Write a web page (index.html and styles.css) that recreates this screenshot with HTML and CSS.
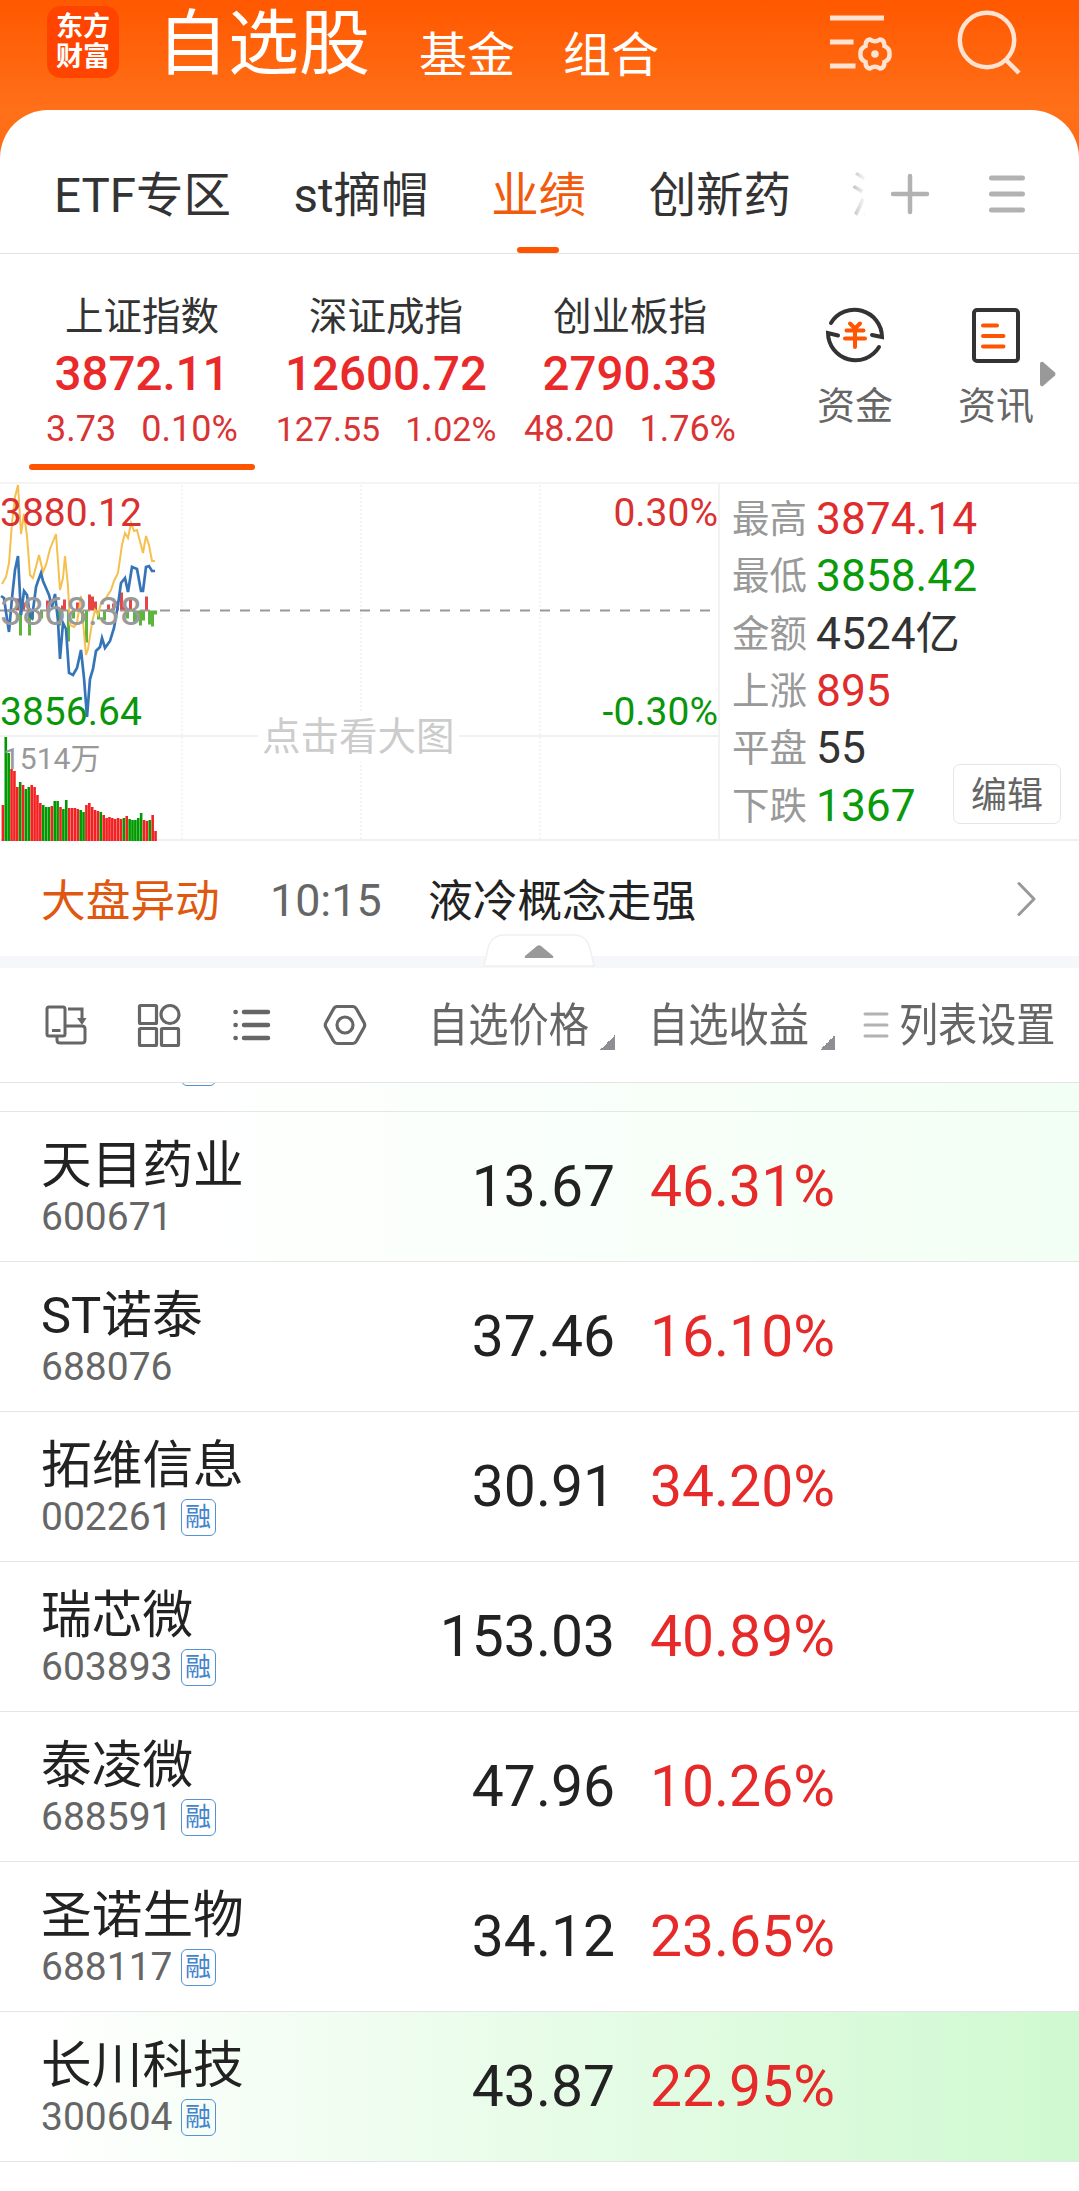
FILE: index.html
```html
<!DOCTYPE html>
<html lang="zh-CN">
<head>
<meta charset="utf-8">
<title>自选股</title>
<link rel="stylesheet" href="styles.css">
</head>
<body>
<header class="top">
  <div class="logo"><span>东方</span><span>财富</span></div>
  <h1>自选股</h1>
  <nav class="top-nav"><a>基金</a><a>组合</a></nav>
  <svg class="ic-manage" width="62" height="58" viewBox="0 0 62 58" fill="none" stroke="#ffe3d2" stroke-width="5">
    <path d="M0 3H54M0 27H23.500M0 51H25.500"/>
    <path stroke-width="4.500" d="M40 24.500Q45 28 50 24.500Q54.500 25 54.500 31Q60 33.500 59.500 39Q60 44.500 54.500 47Q54.500 53 50 53.500Q45 50 40 53.500Q35.500 53 35.500 47Q30 44.500 30.500 39Q30 33.500 35.500 31Q35.500 25 40 24.500Z"/>
    <circle cx="45" cy="39" r="3.800" fill="#ffe3d2" stroke="none"/>
  </svg>
  <svg class="ic-search" width="64" height="66" viewBox="0 0 64 66" fill="none" stroke="#ffe3d2" stroke-width="4.500">
    <circle cx="30" cy="31" r="27.200"/><path d="M48 50L62 64"/>
  </svg>
</header>

<main class="sheet">
  <nav class="tabs">
    <a>ETF专区</a><a>st摘帽</a><a class="on">业绩</a><a>创新药</a><a class="cut">沪</a>
    <svg class="ic-plus" width="40" height="42" viewBox="0 0 40 42" stroke="#b2b2b2" stroke-width="4.500" stroke-linecap="round"><path d="M3 21H37M20 3V39"/></svg>
    <svg class="ic-menu" width="38" height="42" viewBox="0 0 38 42" stroke="#b2b2b2" stroke-width="5" stroke-linecap="round"><path d="M3.500 5H34.500M3.500 21H34.500M3.500 37H34.500"/></svg>
  </nav>

  <section class="indices">
    <div class="index on"><h2>上证指数</h2><strong>3872.11</strong><p><span>3.73</span><span>0.10%</span></p></div>
    <div class="index"><h2>深证成指</h2><strong>12600.72</strong><p class="small"><span>127.55</span><span>1.02%</span></p></div>
    <div class="index"><h2>创业板指</h2><strong>2790.33</strong><p><span>48.20</span><span>1.76%</span></p></div>
    <div class="entry fund">
      <svg width="60" height="62" viewBox="0 0 60 62" fill="none" stroke="#333" stroke-width="4" stroke-linecap="round">
        <path d="M6 19A27.500 27.500 0 0 1 57 33L47 31"/>
        <path d="M54 43A27.500 27.500 0 0 1 3 29L13 31.500"/>
        <path stroke="#ff5500" d="M25 19.500L30 24.500L35 19.500M21.500 26.500H38.500M20 34.500H40M30 26V43"/>
      </svg>
      <span>资金</span>
    </div>
    <div class="entry news">
      <svg width="60" height="62" viewBox="0 0 60 62" fill="none" stroke="#333" stroke-width="4" stroke-linecap="round">
        <rect x="8" y="6" width="44" height="51" rx="3"/>
        <path stroke="#ff5500" d="M17 21.500H31M17 32H37.500M17 42.500H37.500"/>
      </svg>
      <span>资讯</span>
    </div>
    <svg class="ic-more" width="16" height="26" viewBox="0 0 16 26"><path fill="#999" d="M0 3Q0 0 3 1L15 11.500Q16 13 15 14.500L3 25Q0 26 0 23Z"/></svg>
  </section>

  <section class="market">
    <div class="chart">
      <svg id="plot" width="719" height="358" viewBox="0 0 719 358" fill="none">
        <g stroke="#f1f1f1" stroke-width="1.500" stroke-dasharray="2 2"><path d="M182 2V358M361 2V358M540 2V358"/></g>
        <path stroke="#f1f1f1" stroke-width="2" d="M0 253H719"/>
        <g id="flow"></g>
        <path stroke="#999" stroke-width="2" stroke-dasharray="10 10" d="M0 127.500H711"/>
        <polyline stroke="#f5c04e" stroke-width="2" points="2,101 6,94 9,80 12,40 15,14 18,2 21,51 24,31 27,53 30,92 33,95 39,72 43,89 46,82 50,66 56,51 60,107 63,95 65,73 68,103 70,142 74,144 77,140 81,113 84,150 86,172 88,166 92,140 95,127 98,132 101,120 106,115 111,107 114,98 118,90 122,62 125,50 128,55 131,40 134,48 137,47 143,70 146,53 149,62 152,78 155,78"/>
        <polyline stroke="#3674b8" stroke-width="2.700" points="1,113 4,115 6,129 9,149 12,115 15,87 18,73 21,132 24,108 27,112 30,133 32,135 36,104 38,98 41,90 43,98 46,105 49,112 52,124 55,111 58,138 60,176 63,140 66,146 69,190 73,192 77,185 81,167 84,195 87,234 90,196 93,186 96,168 100,164 102,155 105,165 110,158 114,145 118,122 121,100 125,95 128,109 132,84 137,86 141,108 143,108 146,84 149,83 152,88 155,88"/>
        <g id="volume"></g>
      </svg>
      <span class="lab hi">3880.12</span><span class="lab mid">3868.38</span><span class="lab lo">3856.64</span>
      <span class="lab vol">1514万</span>
      <span class="lab hi end">0.30%</span><span class="lab lo end">-0.30%</span>
      <span class="lab hint">点击看大图</span>
    </div>
    <dl class="stats">
      <div><dt>最高</dt><dd class="red">3874.14</dd></div>
      <div><dt>最低</dt><dd class="green">3858.42</dd></div>
      <div><dt>金额</dt><dd>4524亿</dd></div>
      <div><dt>上涨</dt><dd class="red">895</dd></div>
      <div><dt>平盘</dt><dd>55</dd></div>
      <div><dt>下跌</dt><dd class="green">1367</dd></div>
      <button class="edit">编辑</button>
    </dl>
  </section>

  <section class="alert">
    <b>大盘异动</b><time>10:15</time><span>液冷概念走强</span>
    <svg width="20" height="36" viewBox="0 0 20 36" fill="none" stroke="#999" stroke-width="3" stroke-linecap="round" stroke-linejoin="round"><path d="M2 2.500L17 18L2 33.500"/></svg>
  </section>
  <div class="band">
    <svg class="fold" width="114" height="36" viewBox="0 0 114 36"><path fill="#fff" stroke="#f0f0f0" stroke-width="1.500" d="M2 33L6 15Q10 2 22 2H92Q104 2 108 15L112 33Z"/><path fill="#999" d="M55 13Q57 11.500 59 13L71 23Q72 25 70 25H44Q42 25 43 23Z"/></svg>
  </div>

  <section class="tools">
    <svg class="t1" width="44" height="44" viewBox="0 0 44 44" fill="none" stroke="#666" stroke-width="3">
      <rect x="4" y="4" width="18" height="29" rx="2"/><path d="M9 27.500H17.500M22 23H39Q42 23 42 26V37Q42 40 39 40H17Q14 40 14 37V33M25 6H39V17"/><path fill="#666" stroke="none" d="M34 15H43.500L39 22Z"/>
    </svg>
    <svg class="t2" width="44" height="44" viewBox="0 0 44 44" fill="none" stroke="#666" stroke-width="3.200">
      <rect x="2.500" y="2.500" width="17" height="18" rx="1"/><circle cx="33" cy="11.500" r="9"/><rect x="2.500" y="25.500" width="17" height="17" rx="1"/><rect x="24.500" y="25.500" width="17" height="17" rx="1"/>
    </svg>
    <svg class="t3" width="40" height="44" viewBox="0 0 40 44" stroke="#666" stroke-width="4.500" stroke-linecap="round"><path d="M3.500 9H3.700M3.500 22H3.700M3.500 35H3.700M12 9H36M12 22H36M12 35H36"/></svg>
    <svg class="t4" width="44" height="44" viewBox="0 0 44 44" fill="none" stroke="#666" stroke-width="3.200"><path d="M14 3.500H30Q32 3.500 33.500 6L41 19.500Q42.500 22 41 24.500L33.500 38Q32 40.500 30 40.500H14Q12 40.500 10.500 38L3 24.500Q1.500 22 3 19.500L10.500 6Q12 3.500 14 3.500Z"/><circle cx="22" cy="22" r="8"/></svg>
    <span class="col c1"><i>自选价格</i></span><span class="corner"></span>
    <span class="col c2"><i>自选收益</i></span><span class="corner"></span>
    <svg class="t5" width="26" height="28" viewBox="0 0 26 28" stroke="#b2b2b2" stroke-width="3" stroke-linecap="round"><path d="M2 3H24M2 14H24M2 25H24"/></svg>
    <span class="col c3"><i>列表设置</i></span>
  </section>

  <section class="list">
    <div class="row peek tint"><em></em></div>
    <div class="row tint"><div class="who"><h3>天目药业</h3><p>600671</p></div><b>13.67</b><s>46.31%</s></div>
    <div class="row"><div class="who"><h3>ST诺泰</h3><p>688076</p></div><b>37.46</b><s>16.10%</s></div>
    <div class="row"><div class="who"><h3>拓维信息</h3><p>002261<em>融</em></p></div><b>30.91</b><s>34.20%</s></div>
    <div class="row"><div class="who"><h3>瑞芯微</h3><p>603893<em>融</em></p></div><b>153.03</b><s>40.89%</s></div>
    <div class="row"><div class="who"><h3>泰凌微</h3><p>688591<em>融</em></p></div><b>47.96</b><s>10.26%</s></div>
    <div class="row"><div class="who"><h3>圣诺生物</h3><p>688117<em>融</em></p></div><b>34.12</b><s>23.65%</s></div>
    <div class="row deep"><div class="who"><h3>长川科技</h3><p>300604<em>融</em></p></div><b>43.87</b><s>22.95%</s></div>
  </section>
</main>
<script src="chart.js"></script>
</body>
</html>
```
FILE: styles.css
```css
* { box-sizing: border-box; margin: 0; padding: 0; }
body { width: 1079px; height: 2191px; overflow: hidden; font-family: Roboto, "Noto Sans CJK SC", sans-serif; background: linear-gradient(#ff5800, #ff7019 110px, #ff6a14 160px); color: #333; white-space: nowrap; }
h1, h2, h3, b, em, i, s { font-weight: 400; font-style: normal; text-decoration: none; }
svg { flex: none; display: block; }

.top { height: 110px; display: flex; align-items: flex-start; color: #fff; padding-left: 47px; }
.logo { width: 72px; height: 72px; margin-top: 6px; border-radius: 14px; background: #ff4400; display: flex; flex-direction: column; align-items: center; justify-content: center; font-size: 27px; line-height: 30px; font-weight: 700; }
.top h1 { margin-left: 38px; font-size: 71px; line-height: 87px; width: 213px; }
.top-nav { display: flex; gap: 48px; margin-left: 49px; font-size: 48px; line-height: 112px; }
.ic-manage { margin: 15px 0 0 171px; }
.ic-search { margin: 9px 0 0 65px; }

.sheet { background: #fff; border-radius: 48px 48px 0 0; height: 2081px; }
.tabs { height: 144px; border-bottom: 1px solid #e2e2e2; display: flex; align-items: center; padding: 25px 0 0 54px; font-size: 47.500px; line-height: 118px; gap: 62.500px; }
.tabs a { flex: none; padding-top: 2px; height: 118px; line-height: 118px; }
.tabs .on { color: #f25a0c; position: relative; }
.tabs .on::after { content: ""; position: absolute; left: 26px; bottom: 0; width: 42px; height: 6px; border-radius: 3px; background: #ff5500; }
.tabs .cut { width: 15px; overflow: hidden; margin-left: -3px; -webkit-mask-image: linear-gradient(90deg, rgba(0,0,0,.35), transparent); mask-image: linear-gradient(90deg, rgba(0,0,0,.35), transparent); }
.ic-plus { margin-left: -38px; }
.ic-menu { margin-left: -5px; }

.indices { height: 228px; display: flex; padding-left: 20px; }
.index { width: 244px; display: flex; flex-direction: column; align-items: center; position: relative; padding-top: 35px; }
.index h2 { font-size: 38.500px; line-height: 56px; }
.index strong { font-size: 47.500px; line-height: 59px; font-weight: 500; color: #ea2a2a; }
.index p { display: flex; gap: 25px; font-size: 36px; line-height: 50px; color: #d93434; }
.index .small { font-size: 34px; }
.index.on::after { content: ""; position: absolute; left: 9px; bottom: 12px; width: 226px; height: 6px; border-radius: 3px; background: #ff5500; }
.entry { width: 78px; display: flex; flex-direction: column; align-items: center; padding-top: 50px; font-size: 38px; line-height: 56px; color: #666; gap: 12px; }
.fund { margin-left: 64px; }
.news { margin-left: 63px; }
.ic-more { margin: 107px 0 0 5px; }

.market { height: 359px; display: flex; border-top: 2px solid #f4f4f4; border-bottom: 2px solid #f0f0f0; }
.chart { width: 720px; border-right: 2px solid #f2f2f2; position: relative; }
.chart svg { margin-top: -1px; }
.lab { position: absolute; left: 0; font-size: 39px; line-height: 50px; }
.hi { top: 4px; color: #d93030; }
.mid { top: 103px; color: #999; }
.lo { top: 203px; color: #0a960a; }
.end { left: auto; right: 0; }
.vol { top: 250px; left: 3px; font-size: 30px; color: #999; }
.hint { left: 258px; top: 228px; font-size: 38.500px; color: #ccc; background: #fff; padding: 0 4px; }
.stats { flex: 1; padding: 7px 0 0 12px; position: relative; }
.stats div { display: flex; align-items: center; height: 57.300px; line-height: 57px; }
.stats dt { width: 84px; font-size: 37.500px; color: #999; }
.stats dd { font-size: 44.300px; }
.red { color: #e02c2c; }
.green { color: #0a9a0a; }
.edit { position: absolute; right: 18px; bottom: 15px; width: 108px; height: 60px; border: 1px solid #e6e6e6; border-radius: 7px; background: #fff; color: #666; font: 36px/50px Roboto, "Noto Sans CJK SC", sans-serif; padding-top: 4px; }

.alert { height: 115px; display: flex; align-items: center; padding: 0 42px 0 41px; font-size: 44.700px; line-height: 60px; }
.alert b { color: #e0580f; width: 229px; }
.alert time { color: #666; font-size: 44.800px; width: 158px; padding-top: 4px; }
.alert b, .alert span { padding-top: 6px; }
.alert span { flex: 1; color: #222; }
.band { height: 12px; background: #f5f7fa; position: relative; }
.fold { position: absolute; left: 482px; top: -23px; }

.tools { height: 115px; border-bottom: 1px solid #e4e4e4; display: flex; align-items: center; color: #666; padding-left: 43px; }
.t2 { margin-left: 50px; }
.t3 { margin-left: 51px; }
.t4 { margin-left: 51px; }
.col { width: 164px; font-size: 46px; flex: none; margin-top: -8px; }
.col i { display: inline-block; transform: scaleX(.875); transform-origin: 0 50%; }
.c1 { margin-left: 61px; }
.c2 { margin-left: 33px; }
.c3 { width: 170px; margin-left: 10px; }
.c3 i { transform: scaleX(.85); }
.corner { flex: none; width: 15px; height: 15px; margin: 35px 0 0 8px; background: linear-gradient(135deg, transparent 50%, #8f8e94 50%); }
.t5 { margin-left: 28px; }

.row { height: 150px; border-bottom: 1px solid #e6e6e6; display: flex; align-items: center; padding-left: 41px; }
.peek { height: 29px; align-items: flex-start; padding-left: 181px; overflow: hidden; }
.row.peek em { margin-top: -34px; }
.tint { background: linear-gradient(90deg, #fff 12%, #f2fff4); }
.deep { background: linear-gradient(90deg, #fff 3%, #cff9d0); }
.who { width: 300px; padding-top: 3px; }
.who h3 { font-size: 50.700px; line-height: 58px; color: #222; padding-top: 1px; }
.who p { display: flex; align-items: center; font-size: 39px; line-height: 45px; color: #666; }
.row em { width: 35px; height: 37px; border: 1px solid #5592d2; border-radius: 6px; font-size: 26px; line-height: 34px; text-align: center; color: #4384cc; display: block; }
.who em { margin-left: 8px; }
.row b { width: 274px; text-align: right; font-size: 57px; color: #222; }
.row s { margin-left: 35px; font-size: 57px; color: #e62a2a; }
```
FILE: chart.js
```js
const R = '#f32121', G = '#009a00';
// Volume bars, one per minute: height in px and direction
const heights = [36,104,88,72,70,54,59,56,52,54,56,54,46,38,36,34,34,35,40,40,34,32,41,33,33,33,32,31,29,36,38,34,31,30,29,26,23,24,23,22,23,22,23,25,22,21,21,23,28,21,20,21,26,10];
const colors = 'rggrrrgrggrrrrgggrggrggrrrrgg' + 'rrrrrgrrrrrrrgrgggggrrgr' + 'r';
document.getElementById('volume').innerHTML = heights.map((h, i) =>
  `<rect x="${1.6 + i * 2.88}" y="${358 - h}" width="2.6" height="${h}" fill="${colors[i] === 'g' ? G : R}"/>`).join('');
// Net flow bars around the midline: [x, height], positive above
const flow = [[17,12],[20,-25],[29,-25],[23,8],[32,-9],[41,-8],[47,10],[59,-15],[62,5],[64,11],[68,-31],[73,-8],[77,8],[82,-12],[86,-32],[89,16],[92,14],[95,9],[98,-9],[104,-10],[108,6],[113,7],[117,9],[121,18],[124,6],[127,-8],[130,11],[134,-12],[137,-9],[140,-15],[143,-10],[146,14],[149,-14],[152,-16],[155,-4]];
document.getElementById('flow').innerHTML = flow.map(([x, h]) =>
  `<rect x="${x - 1}" y="${h > 0 ? 127.5 - h : 127.5}" width="3" height="${Math.abs(h)}" fill="${h > 0 ? '#e64545' : '#5cb53c'}"/>`).join('');
```
